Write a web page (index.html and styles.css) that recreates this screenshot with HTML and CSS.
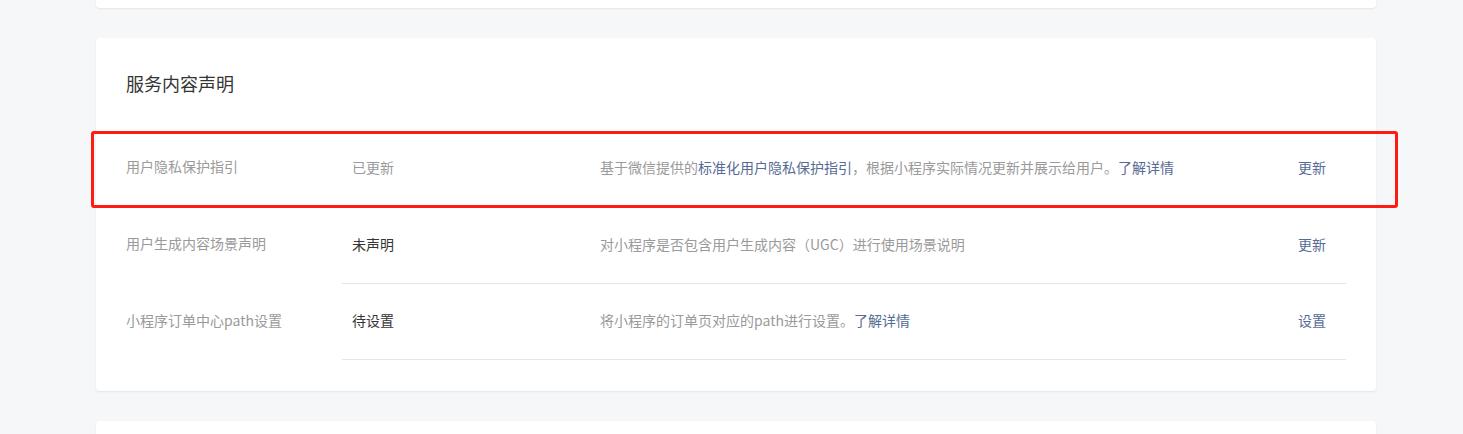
FILE: index.html
```html
<!DOCTYPE html>
<html lang="zh-CN">
<head>
<meta charset="utf-8">
<link rel="stylesheet" href="styles.css">
</head>
<body>
<div class="page">
  <div class="card card-prev"></div>
  <div class="card card-main">
    <h2 class="title">服务内容声明</h2>
    <div class="list">
      <div class="row">
        <div class="label">用户隐私保护指引</div>
        <div class="body first">
          <div class="status muted">已更新</div>
          <div class="desc">基于微信提供的<a class="link">标准化用户隐私保护指引</a>，根据小程序实际情况更新并展示给用户。<a class="link">了解详情</a></div>
          <div class="action"><a class="link">更新</a></div>
        </div>
      </div>
      <div class="row">
        <div class="label">用户生成内容场景声明</div>
        <div class="body">
          <div class="status">未声明</div>
          <div class="desc">对小程序是否包含用户生成内容（UGC）进行使用场景说明</div>
          <div class="action"><a class="link">更新</a></div>
        </div>
      </div>
      <div class="row">
        <div class="label">小程序订单中心path设置</div>
        <div class="body">
          <div class="status">待设置</div>
          <div class="desc">将小程序的订单页对应的path进行设置。<a class="link">了解详情</a></div>
          <div class="action"><a class="link">设置</a></div>
        </div>
      </div>
    </div>
  </div>
  <div class="card card-next"></div>
  <div class="highlight"></div>
</div>
</body>
</html>
```

FILE: styles.css
```css
html, body {
  margin: 0;
  padding: 0;
  background: #f6f7f9;
}
body {
  font-family: "Noto Sans CJK SC", "Noto Sans", sans-serif;
  font-size: 14px;
  color: #353535;
}
.page {
  position: relative;
  width: 1280px;
  margin: 0 0 0 96px;
  display: flex;
  flex-direction: column;
  gap: 30px;
  margin-top: -20px;
}
.card {
  background: #fff;
  border-radius: 4px;
  box-shadow: 0 1px 2px rgba(0, 0, 0, 0.08);
}
.card-prev {
  height: 28px;
}
.card-main {
  padding: 0 30px 31px;
}
.card-next {
  height: 60px;
}
.title {
  margin: 0;
  padding: 33px 0 34px;
  font-size: 18px;
  font-weight: normal;
  line-height: 24px;
  color: #353535;
}
.list {
  display: flex;
  flex-direction: column;
}
.row {
  display: flex;
  height: 77px;
}
.label {
  width: 216px;
  flex: none;
  display: flex;
  align-items: center;
  padding-bottom: 3px;
  color: #9a9a9a;
}
.body {
  flex: 1;
  display: flex;
  align-items: center;
  border-top: 1px solid #e6e6e6;
}
.body.first {
  border-top: 1px solid transparent;
}
.row:last-child .body {
  border-bottom: 1px solid #e6e6e6;
}
.status,
.desc,
.action {
  padding-bottom: 3px;
}
.status {
  width: 248px;
  flex: none;
  padding-left: 10px;
  color: #353535;
}
.status.muted {
  color: #9a9a9a;
}
.desc {
  flex: 1;
  color: #9a9a9a;
}
.action {
  flex: none;
  padding-right: 20px;
}
.link {
  color: #576b95;
  text-decoration: none;
  cursor: pointer;
}
.highlight {
  position: absolute;
  left: -5px;
  top: 151px;
  width: 1301px;
  height: 71px;
  border: 3px solid #ff1a12;
  border-radius: 3px;
}
```
